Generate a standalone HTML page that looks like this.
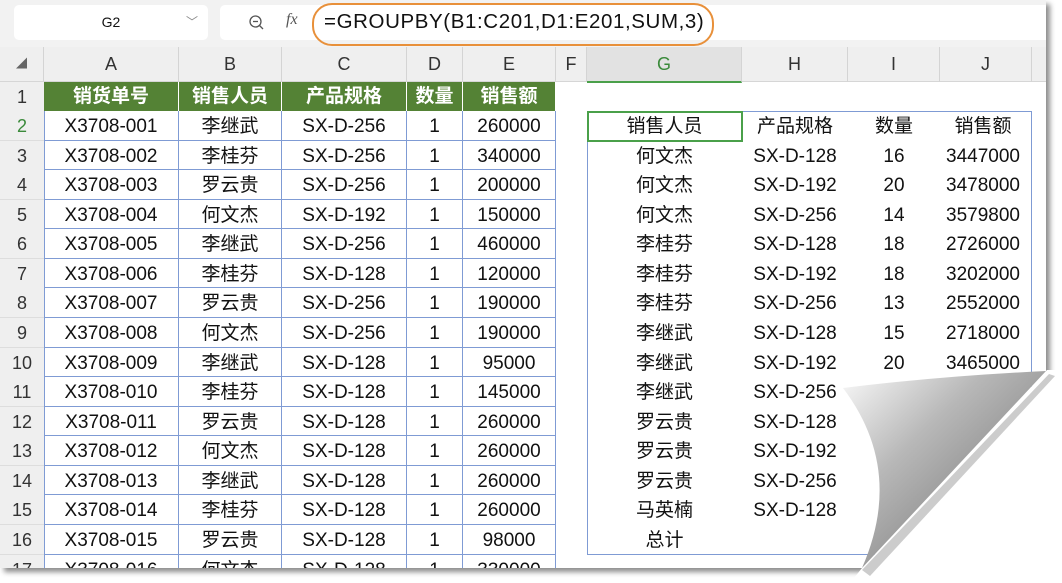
<!DOCTYPE html>
<html><head><meta charset="utf-8"><style>
*{margin:0;padding:0;box-sizing:border-box}
body{width:1062px;height:583px;background:#fff;position:relative;overflow:hidden;font-family:"Liberation Sans","Noto Sans CJK SC",sans-serif;color:#111}
#page{position:absolute;left:0;top:0;width:1046px;height:568px;background:#fff;box-shadow:4px 4px 5px rgba(0,0,0,.45);overflow:hidden}
.top{position:absolute;left:0;top:0;width:1046px;height:47px;background:#f2f2f2}
.nb{position:absolute;left:14px;top:5px;width:194px;height:35px;background:#fff;border-radius:5px;font-size:14px;line-height:35px;text-align:center}
.fb{position:absolute;left:220px;top:5px;width:830px;height:35px;background:#fff;border-radius:5px}
.ch{position:absolute;top:47px;height:35px;background:#efefef;border-bottom:1px solid #d6d6d6}
.c{position:absolute;text-align:center;font-size:19px;line-height:31px;white-space:nowrap}
.hc{border-right:1px solid #d4d4d4;color:#333;font-size:18px;line-height:35px}
.rn{position:absolute;left:0;width:44px;background:#efefef;color:#333;font-size:18px;text-align:center;border-bottom:1px solid #ddd}
.g{position:absolute;border-right:1px solid #7f9bd4;border-bottom:1px solid #7f9bd4}
.h1{background:#548235;color:#fff;font-weight:bold;border-right:1px solid #fff}
</style></head><body>
<div id="page">
<div class="top"></div>
<div class="nb">G2<span style="position:absolute;right:10px;top:0;color:#888;font-size:12px">﹀</span></div>
<div class="fb">
<svg style="position:absolute;left:28px;top:9px" width="18" height="18" viewBox="0 0 18 18"><circle cx="7.5" cy="7.5" r="5.5" fill="none" stroke="#555" stroke-width="1.3"/><line x1="11.5" y1="11.5" x2="15" y2="15" stroke="#555" stroke-width="1.3"/><line x1="5" y1="7.5" x2="10" y2="7.5" stroke="#555" stroke-width="1.3"/></svg>
<span style="position:absolute;left:66px;top:6px;font-family:'Liberation Serif',serif;font-style:italic;font-size:16px;color:#555">fx</span>
</div>
<div style="position:absolute;left:312px;top:3px;width:402px;height:43px;border:2px solid #e8903a;border-radius:20px"></div>
<div style="position:absolute;left:324px;top:10px;font-size:20.5px;letter-spacing:0.6px">=GROUPBY(B1:C201,D1:E201,SUM,3)</div>

<div class="ch" style="left:0;width:1046px"></div>
<div class="c hc" style="top:47px;left:0;width:44px;font-size:11px;color:#666">◢</div>
<div class="c hc" style="top:47px;left:44px;width:135px">A</div>
<div class="c hc" style="top:47px;left:179px;width:103px">B</div>
<div class="c hc" style="top:47px;left:282px;width:125px">C</div>
<div class="c hc" style="top:47px;left:407px;width:56px">D</div>
<div class="c hc" style="top:47px;left:463px;width:93px">E</div>
<div class="c hc" style="top:47px;left:556px;width:31px">F</div>
<div class="c hc" style="top:47px;left:587px;width:155px;color:#3a8a3a;background:#e2e2e2;border-bottom:2px solid #4aa04a;height:36px">G</div>
<div class="c hc" style="top:47px;left:742px;width:106px">H</div>
<div class="c hc" style="top:47px;left:848px;width:92px">I</div>
<div class="c hc" style="top:47px;left:940px;width:92px">J</div>

<div class="rn" style="top:82px;height:30px;line-height:30px">1</div>
<div class="c h1" style="top:82px;left:44px;width:135px;height:29px;line-height:29px">销货单号</div>
<div class="c h1" style="top:82px;left:179px;width:103px;height:29px;line-height:29px">销售人员</div>
<div class="c h1" style="top:82px;left:282px;width:125px;height:29px;line-height:29px">产品规格</div>
<div class="c h1" style="top:82px;left:407px;width:56px;height:29px;line-height:29px">数量</div>
<div class="c h1" style="top:82px;left:463px;width:93px;height:29px;line-height:29px">销售额</div>

<div style="position:absolute;left:44px;top:111px;width:512px;height:460px;border-left:1px solid #7f9bd4"></div>

<div style="position:absolute;left:587px;top:111px;width:445px;height:444px;border:1px solid #7f9bd4"></div>
<div style="position:absolute;left:587px;top:111px;width:156px;height:31px;border:2px solid #4aa04a"></div>

<div id="data"></div>
<script>
var L=[["X3708-001","李继武","SX-D-256","260000"],["X3708-002","李桂芬","SX-D-256","340000"],["X3708-003","罗云贵","SX-D-256","200000"],["X3708-004","何文杰","SX-D-192","150000"],["X3708-005","李继武","SX-D-256","460000"],["X3708-006","李桂芬","SX-D-128","120000"],["X3708-007","罗云贵","SX-D-256","190000"],["X3708-008","何文杰","SX-D-256","190000"],["X3708-009","李继武","SX-D-128","95000"],["X3708-010","李桂芬","SX-D-128","145000"],["X3708-011","罗云贵","SX-D-128","260000"],["X3708-012","何文杰","SX-D-128","260000"],["X3708-013","李继武","SX-D-128","260000"],["X3708-014","李桂芬","SX-D-128","260000"],["X3708-015","罗云贵","SX-D-128","98000"],["X3708-016","何文杰","SX-D-128","330000"]];
var R=[["销售人员","产品规格","数量","销售额"],["何文杰","SX-D-128","16","3447000"],["何文杰","SX-D-192","20","3478000"],["何文杰","SX-D-256","14","3579800"],["李桂芬","SX-D-128","18","2726000"],["李桂芬","SX-D-192","18","3202000"],["李桂芬","SX-D-256","13","2552000"],["李继武","SX-D-128","15","2718000"],["李继武","SX-D-192","20","3465000"],["李继武","SX-D-256","16","3580000"],["罗云贵","SX-D-128","",""],["罗云贵","SX-D-192","",""],["罗云贵","SX-D-256","",""],["马英楠","SX-D-128","",""],["总计","","",""]];
var h="",cols=[[44,135],[179,103],[282,125],[407,56],[463,93]];
for(var i=0;i<16;i++){var t=(111+i*29.57).toFixed(1),r=L[i],v=[r[0],r[1],r[2],"1",r[3]];
h+='<div class="rn" style="top:'+t+'px;height:30px;line-height:31px;'+(i==0?'color:#3a8a3a;':'')+'">'+(i+2)+'</div>';
for(var j=0;j<5;j++)h+='<div class="c g" style="top:'+t+'px;left:'+cols[j][0]+'px;width:'+cols[j][1]+'px;height:29.6px">'+v[j]+'</div>';}
var rc=[[587,155],[742,106],[848,92],[940,86]];
for(var i=0;i<R.length;i++){var t=(111+i*29.57).toFixed(1);for(var j=0;j<4;j++)h+='<div class="c" style="top:'+t+'px;left:'+rc[j][0]+'px;width:'+rc[j][1]+'px">'+R[i][j]+'</div>';}
document.getElementById("data").innerHTML=h;
</script>
</div>
<svg style="position:absolute;left:0;top:0" width="1062" height="583">
<defs><linearGradient id="cg" x1="0" y1="0" x2="1" y2="1"><stop offset="0" stop-color="#fafafa"/><stop offset="0.35" stop-color="#b8b8b8"/><stop offset="0.7" stop-color="#8a8a8a"/><stop offset="1" stop-color="#6a6a6a"/></linearGradient></defs>
<polygon points="1047,370 1062,370 1062,583 850,583 862,568" fill="#fff"/>
<path d="M1049,374 L1055,376 L870,576 L862,570 Z" fill="#999" opacity="0.5"/>
<path d="M843,388 Q940,376 1046,371 L862,568 Q905,470 843,388 Z" fill="url(#cg)"/>
</svg>
</body></html>
